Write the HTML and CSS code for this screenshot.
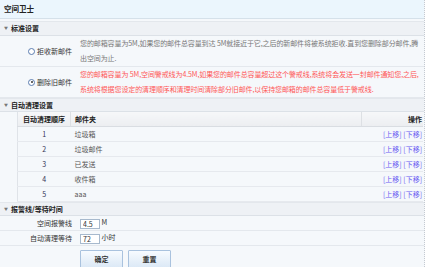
FILE: index.html
```html
<!DOCTYPE html>
<html lang="zh-CN">
<head>
  <meta charset="UTF-8" />
  <title>空间卫士</title>
  <link rel="stylesheet" href="styles.css">
</head>
<body>
  <div class="guard-page">
    <div class="guard-title">空间卫士</div>

    <!-- 标准设置 -->
    <div class="guard-section first"><span class="guard-arrow">&#9660;</span>标准设置</div>
    <div class="guard-opt">
      <label class="guard-opt-label"><span class="guard-radio"></span>拒收新邮件</label>
      <div class="guard-opt-desc">您的邮箱容量为5M,如果您的邮件总容量到达&nbsp;5M就接近于它,之后的新邮件将被系统拒收.直到您删除部分邮件,腾出空间为止.</div>
    </div>
    <div class="guard-opt">
      <label class="guard-opt-label"><span class="guard-radio checked"></span>删除旧邮件</label>
      <div class="guard-opt-desc warn">您的邮箱容量为&nbsp;5M,空间警戒线为4.5M,如果您的邮件总容量超过这个警戒线,系统将会发送一封邮件通知您,之后,系统将根据您设定的清理顺序和清理时间清除部分旧邮件,以保持您邮箱的邮件总容量低于警戒线.</div>
    </div>

    <!-- 自动清理设置 -->
    <div class="guard-section"><span class="guard-arrow">&#9660;</span>自动清理设置</div>
    <table class="guard-table">
      <thead>
        <tr>
          <th class="col-order">自动清理顺序</th>
          <th class="col-folder">邮件夹</th>
          <th class="col-ops">操作</th>
        </tr>
      </thead>
      <tbody>
        <tr><td class="col-order">1</td><td>垃圾箱</td><td class="col-ops"><a href="#">[上移]</a> <a href="#">[下移]</a></td></tr>
        <tr><td class="col-order">2</td><td>垃圾邮件</td><td class="col-ops"><a href="#">[上移]</a> <a href="#">[下移]</a></td></tr>
        <tr><td class="col-order">3</td><td>已发送</td><td class="col-ops"><a href="#">[上移]</a> <a href="#">[下移]</a></td></tr>
        <tr><td class="col-order">4</td><td>收件箱</td><td class="col-ops"><a href="#">[上移]</a> <a href="#">[下移]</a></td></tr>
        <tr><td class="col-order">5</td><td>aaa</td><td class="col-ops"><a href="#">[上移]</a> <a href="#">[下移]</a></td></tr>
      </tbody>
    </table>

    <!-- 报警线/等待时间 -->
    <div class="guard-section"><span class="guard-arrow">&#9660;</span>报警线/等待时间</div>
    <div class="guard-field">
      <span class="guard-field-label">空间报警线</span>
      <span><input class="guard-input" type="text" value="4.5"> M</span>
    </div>
    <div class="guard-field">
      <span class="guard-field-label">自动清理等待</span>
      <span><input class="guard-input" type="text" value="72"> 小时</span>
    </div>
    <div class="guard-actions">
      <button class="guard-btn">确定</button>
      <button class="guard-btn">重置</button>
    </div>
  </div>
</body>
</html>
```

FILE: styles.css
```css
body {
  margin: 0;
  font-family: "Noto Sans CJK SC", "DejaVu Sans", sans-serif;
  font-size: 7px;
  color: #333;
  background: #f5f8fb;
}

.guard-page {
  width: 425px;
  height: 267px;
  box-sizing: border-box;
  border-right: 1px dotted #c5cad1;
  overflow: hidden;
}

.guard-title {
  height: 19px;
  box-sizing: border-box;
  line-height: 18px;
  padding-left: 4px;
  background: #ebf6fd;
  border-bottom: 1px solid #d5e1ea;
  font-size: 7.5px;
  font-weight: bold;
  color: #222;
}

.guard-section {
  height: 14px;
  box-sizing: border-box;
  line-height: 12px;
  padding-left: 4px;
  background: #eef1f5;
  border-top: 1px solid #e3e7ec;
  border-bottom: 1px solid #dce1e7;
  font-weight: bold;
  color: #222;
}

.guard-section.first {
  height: 15px;
  line-height: 13px;
  margin-top: 2px;
}

.guard-arrow {
  display: inline-block;
  font-size: 4px;
  color: #777;
  margin-right: 3px;
  vertical-align: 1px;
}

.guard-opt {
  display: grid;
  grid-template-columns: 80px 1fr;
  height: 31px;
  box-sizing: border-box;
  border-bottom: 1px solid #e4e8ed;
}

.guard-opt-label {
  display: flex;
  align-items: center;
  justify-content: flex-end;
  padding-right: 8px;
  gap: 2px;
  color: #333;
}

.guard-radio {
  width: 5px;
  height: 5px;
  border: 1px solid #5b7db0;
  border-radius: 50%;
  background: #fff;
  position: relative;
}

.guard-radio.checked::after {
  content: "";
  position: absolute;
  left: 1.5px;
  top: 1.5px;
  width: 2px;
  height: 2px;
  border-radius: 50%;
  background: #333;
}

.guard-opt-desc {
  line-height: 15px;
  color: #777;
  padding-right: 1px;
  letter-spacing: -0.1px;
}

.guard-opt-desc.warn {
  color: #ff5757;
}

.guard-table {
  margin-left: 17px;
  width: 406px;
  border-collapse: collapse;
  border-left: 1px solid #dfe3e8;
}

.guard-table th {
  height: 14px;
  padding: 0 4px;
  text-align: left;
  font-weight: bold;
  color: #222;
  background: linear-gradient(#f6f7f9, #eceef1);
  border-bottom: 1px solid #d9dde2;
}

.guard-table th + th {
  border-left: 1px solid #dde0e4;
}

.guard-table td {
  height: 14px;
  padding: 0 4px;
  border-bottom: 1px solid #e6e9ee;
  color: #555;
}

.guard-table .col-order {
  width: 44px;
  text-align: center;
}

.guard-table td.col-order {
  color: #335;
}

.guard-table .col-ops {
  width: 56px;
  text-align: right;
  padding-right: 1px;
}

.guard-table a {
  color: #6a5cf2;
  text-decoration: none;
}

.guard-field {
  display: grid;
  grid-template-columns: 80px 1fr;
  align-items: center;
  height: 15px;
  box-sizing: border-box;
  border-bottom: 1px solid #e4e8ed;
}

.guard-field-label {
  text-align: right;
  padding-right: 8px;
}

.guard-input {
  width: 20px;
  height: 10px;
  box-sizing: border-box;
  padding: 0 2px;
  border: 1px solid #a7b9cd;
  font-family: inherit;
  font-size: 7px;
  color: #333;
  vertical-align: middle;
}

.guard-actions {
  display: flex;
  gap: 5px;
  padding: 4px 0 0 80px;
}

.guard-btn {
  width: 43px;
  height: 18px;
  border: 1px solid #a9c2de;
  border-radius: 1px;
  background: linear-gradient(#f7fbff, #dce9f6);
  font-family: inherit;
  font-size: 7px;
  font-weight: bold;
  color: #333;
  cursor: pointer;
}
```
